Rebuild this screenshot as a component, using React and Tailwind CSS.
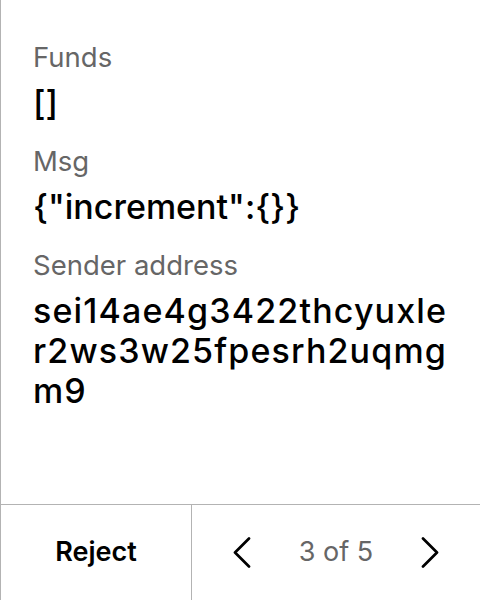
const Field = ({ label, lines, wide }) => (
  <div className="flex flex-col gap-[10px]">
    <div className="text-[27.5px] leading-[32px] text-[#666666]">{label}</div>
    <div
      className={
        wide
          ? "text-[34px] leading-[40px] font-medium text-black tracking-[1.15px]"
          : "text-[34px] leading-[40px] font-medium text-black"
      }
    >
      {lines.map((line) => (
        <div key={line}>{line}</div>
      ))}
    </div>
  </div>
);

const Chevron = ({ dir }) => (
  <svg width="18" height="31" viewBox="0 0 18 31" fill="none" aria-hidden="true">
    <polyline
      points={dir === "left" ? "16,1.5 2,15.5 16,29.5" : "2,1.5 16,15.5 2,29.5"}
      stroke="#000"
      strokeWidth="2.7"
      strokeLinecap="round"
      strokeLinejoin="round"
    />
  </svg>
);

export default function App() {
  return (
    <div
      className="h-[600px] w-[480px] flex flex-col bg-white border-l border-[#b3b3b3]"
      style={{ fontFamily: "Inter, 'Noto Sans', sans-serif" }}
    >
      <div className="flex-1 flex flex-col gap-[22px] pt-[41px] pl-[32px] pr-[24px] overflow-hidden">
        <Field label="Funds" lines={["[]"]} />
        <Field label="Msg" lines={['{"increment":{}}']} />
        {/* address wraps the same way as the wallet popup */}
        <Field
          label="Sender address"
          wide
          lines={["sei14ae4g3422thcyuxle", "r2ws3w25fpesrh2uqmg", "m9"]}
        />
      </div>

      {/* footer actions */}
      <div className="h-[96px] flex border-t border-[#b3b3b3]">
        <button
          type="button"
          className="w-[191px] flex items-center justify-center border-r border-[#b3b3b3] text-[27px] font-semibold text-black"
        >
          Reject
        </button>
        <div className="flex-1 flex items-center justify-center gap-[48px]">
          <button type="button" className="flex items-center">
            <Chevron dir="left" />
          </button>
          <span className="text-[27px] text-[#666666]">3 of 5</span>
          <button type="button" className="flex items-center">
            <Chevron dir="right" />
          </button>
        </div>
      </div>
    </div>
  );
}
